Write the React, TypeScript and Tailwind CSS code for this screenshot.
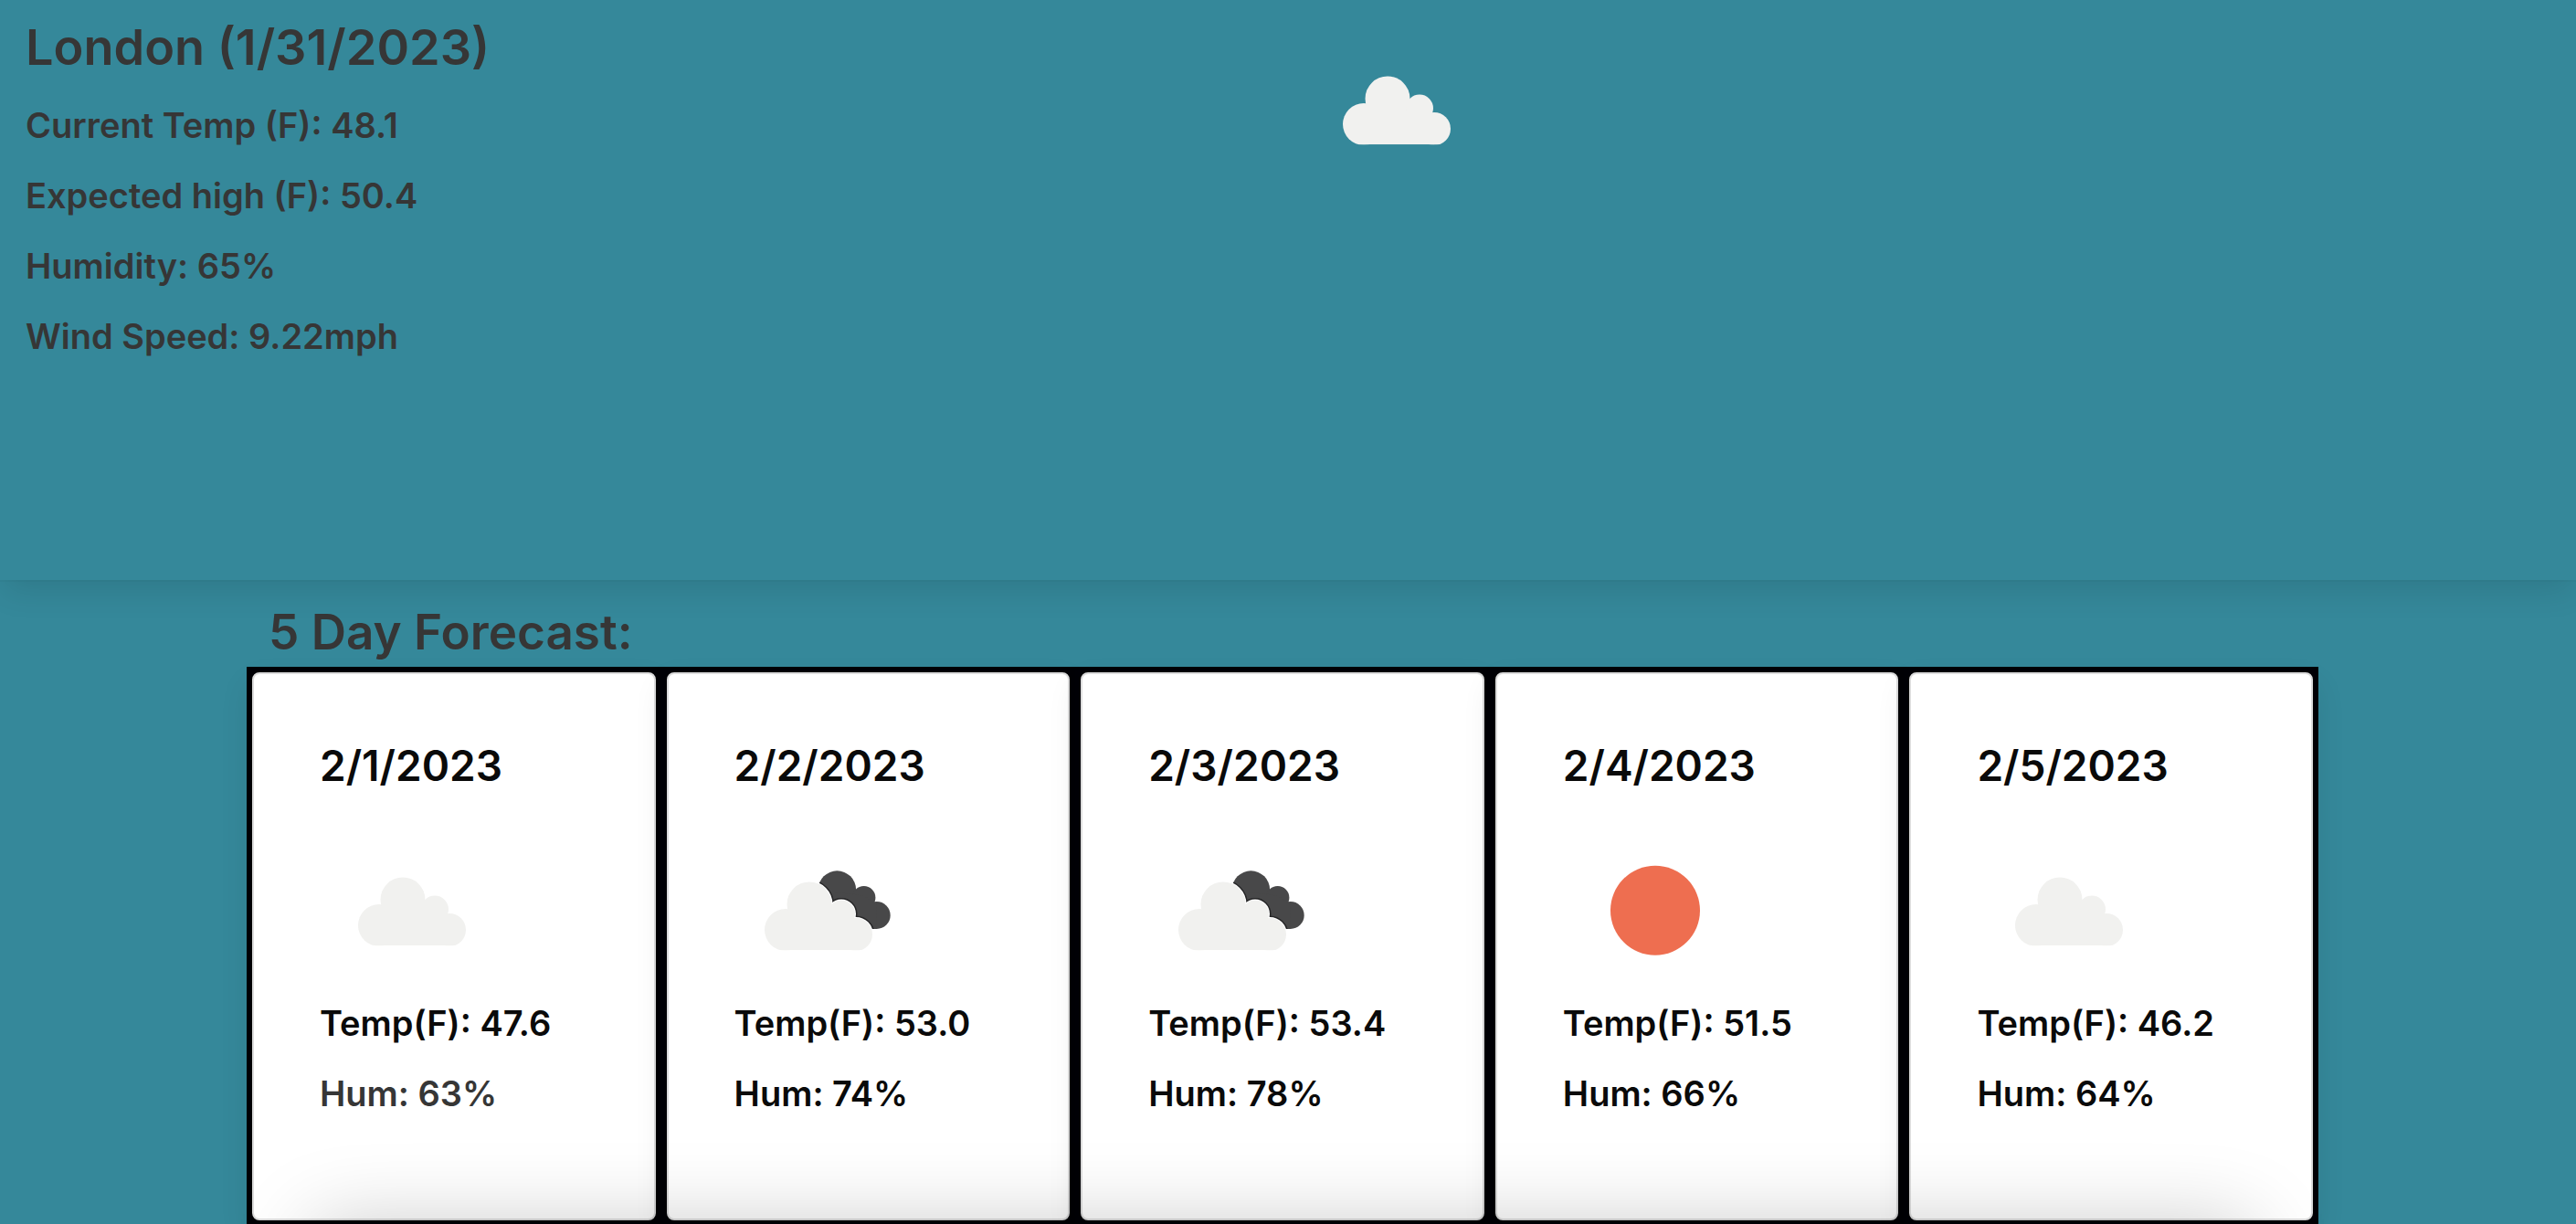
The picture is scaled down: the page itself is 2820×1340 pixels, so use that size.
import React from "react";

type IconKind = "cloud" | "broken" | "sun";

const CLOUD_BODY = (
  <>
    <circle cx="63" cy="115" r="23" />
    <circle cx="89" cy="87" r="24.5" />
    <circle cx="124" cy="97.5" r="15" />
    <circle cx="140" cy="120" r="18" />
    <path d="M62 100H112L128 98L140 110V137.200H57L56 120Z" />
  </>
);

const DARK_CLOUD = (
  <>
    <circle cx="112.400" cy="77" r="20.700" />
    <circle cx="141.700" cy="85.700" r="12.700" />
    <circle cx="155.700" cy="105" r="15" />
    <path d="M110 80L132 82L142 84L155 92L156 120H148L110 100Z" />
  </>
);

function WeatherIcon({ kind, label }: { kind: IconKind; label: string }) {
  return (
    <svg viewBox="0 0 200 200" role="img" aria-label={label} className="block size-[200px]">
      <defs>
        <clipPath id="cloud-base">
          <rect x="0" y="0" width="200" height="137.200" />
        </clipPath>
        <clipPath id="dark-cloud">{DARK_CLOUD}</clipPath>
      </defs>
      {kind === "sun" && <circle cx="101" cy="99.700" r="49" fill="#ee6e50" />}
      {kind === "broken" && (
        <>
          <g fill="#484849">{DARK_CLOUD}</g>
          <g clipPath="url(#dark-cloud)">
            <g transform="translate(-7 6)" stroke="#262627" strokeWidth="5">
              {CLOUD_BODY}
            </g>
          </g>
          <g transform="translate(-7 6)" fill="#ffffff" stroke="#ffffff" strokeWidth="2">
            {CLOUD_BODY}
          </g>
          <g transform="translate(-7 6)" fill="#f1f1ef" clipPath="url(#cloud-base)">
            {CLOUD_BODY}
          </g>
        </>
      )}
      {kind === "cloud" && (
        <g transform="translate(2 1)" fill="#f1f1ef" clipPath="url(#cloud-base)">
          {CLOUD_BODY}
        </g>
      )}
    </svg>
  );
}

const current = [
  "Current Temp (F): 48.1",
  "Expected high (F): 50.4",
  "Humidity: 65%",
  "Wind Speed: 9.22mph",
];

const days: { date: string; icon: IconKind; label: string; temp: string; hum: string; muted?: boolean }[] = [
  { date: "2/1/2023", icon: "cloud", label: "Scattered clouds", temp: "47.6", hum: "63", muted: true },
  { date: "2/2/2023", icon: "broken", label: "Broken clouds", temp: "53.0", hum: "74" },
  { date: "2/3/2023", icon: "broken", label: "Broken clouds", temp: "53.4", hum: "78" },
  { date: "2/4/2023", icon: "sun", label: "Clear sky", temp: "51.5", hum: "66" },
  { date: "2/5/2023", icon: "cloud", label: "Scattered clouds", temp: "46.2", hum: "64" },
];

export default function App() {
  return (
    <main className="h-screen overflow-hidden bg-[#35889a] font-['Inter',sans-serif] font-semibold text-[#363636]">
      <section className="grid min-h-[635px] grid-cols-2 shadow-[0_16px_32px_-4px_rgba(10,10,10,0.1),0_0_0_2px_rgba(10,10,10,0.02)]">
        <div className="px-7 pt-5">
          <h1 className="mb-4 text-[54px] leading-[63px]">London (1/31/2023)</h1>
          {current.map((line) => (
            <p key={line} className="text-[38px] leading-[77px]">
              {line}
            </p>
          ))}
        </div>
        <div className="px-[18px] pt-5">
          <WeatherIcon kind="cloud" label="Scattered clouds" />
        </div>
      </section>

      <section className="ml-[270px] mr-[282px]">
        <h2 className="px-6 pb-[7px] pt-[26px] text-[53px] leading-[62px]">5 Day Forecast:</h2>
        <div className="relative grid grid-cols-5">
          {days.map((day) => (
            <div
              key={day.date}
              className="bg-[#000005] p-1.5 shadow-[0_16px_32px_-4px_rgba(10,10,10,0.1)]"
            >
              <article className="min-h-[600px] rounded-lg border-2 border-[#dcdcdc] bg-white pl-[72px] pt-[72px] text-[#0a0a0a]">
                <h3 className="mb-[31px] text-[46px] leading-[56px]">{day.date}</h3>
                <WeatherIcon kind={day.icon} label={day.label} />
                <p className="mb-[31px] text-[38px] leading-[46px]">Temp(F): {day.temp}</p>
                <p className={day.muted ? "text-[38px] leading-[46px] text-[#363636]" : "text-[38px] leading-[46px]"}>
                  Hum: {day.hum}%
                </p>
              </article>
            </div>
          ))}
          <div className="absolute inset-x-[74px] top-full h-40 shadow-[0_0_90px_rgba(10,10,10,0.22)]" />
        </div>
      </section>
    </main>
  );
}
